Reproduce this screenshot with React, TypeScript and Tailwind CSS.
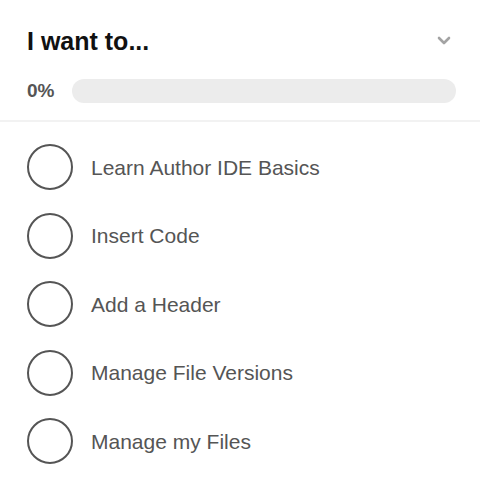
const tasks = [
  'Learn Author IDE Basics',
  'Insert Code',
  'Add a Header',
  'Manage File Versions',
  'Manage my Files',
]

function Chevron() {
  return (
    <svg width="14" height="10" viewBox="0 0 14 10" fill="none" aria-hidden="true">
      <polyline points="2,2 7,7 12,2" stroke="#a3a3a3" strokeWidth="2.6" strokeLinecap="round" strokeLinejoin="round" />
    </svg>
  )
}

export default function App() {
  return (
    <div className="h-[480px] w-[480px] overflow-hidden bg-white font-['Liberation_Sans',Arial,sans-serif]">
      {/* Header */}
      <div className="pl-[27px] pr-[24px] pt-[26px] pb-[17px]">
        <div className="flex items-center justify-between">
          <h1 className="text-[25px] leading-[30px] font-bold text-[#111]">I want to...</h1>
          <div className="mr-[5px] flex items-center">
            <Chevron />
          </div>
        </div>
        <div className="mt-[23px] flex items-center gap-[18px]">
          <span className="text-[19px] leading-6 font-bold text-[#555]">0%</span>
          <div className="h-6 flex-1 rounded-full bg-[#ececec]" />
        </div>
      </div>

      <div className="h-[2px] w-full bg-[#f2f2f2]" />

      {/* Task list */}
      <ul className="px-[27px] pt-[11px]">
        {tasks.map((t) => (
          <li key={t} className="flex h-[68.5px] items-center gap-[18px]">
            <span className="h-[46px] w-[46px] shrink-0 rounded-full border-2 border-[#555]" />
            <span className="text-[21px] text-[#555]">{t}</span>
          </li>
        ))}
      </ul>
    </div>
  )
}
